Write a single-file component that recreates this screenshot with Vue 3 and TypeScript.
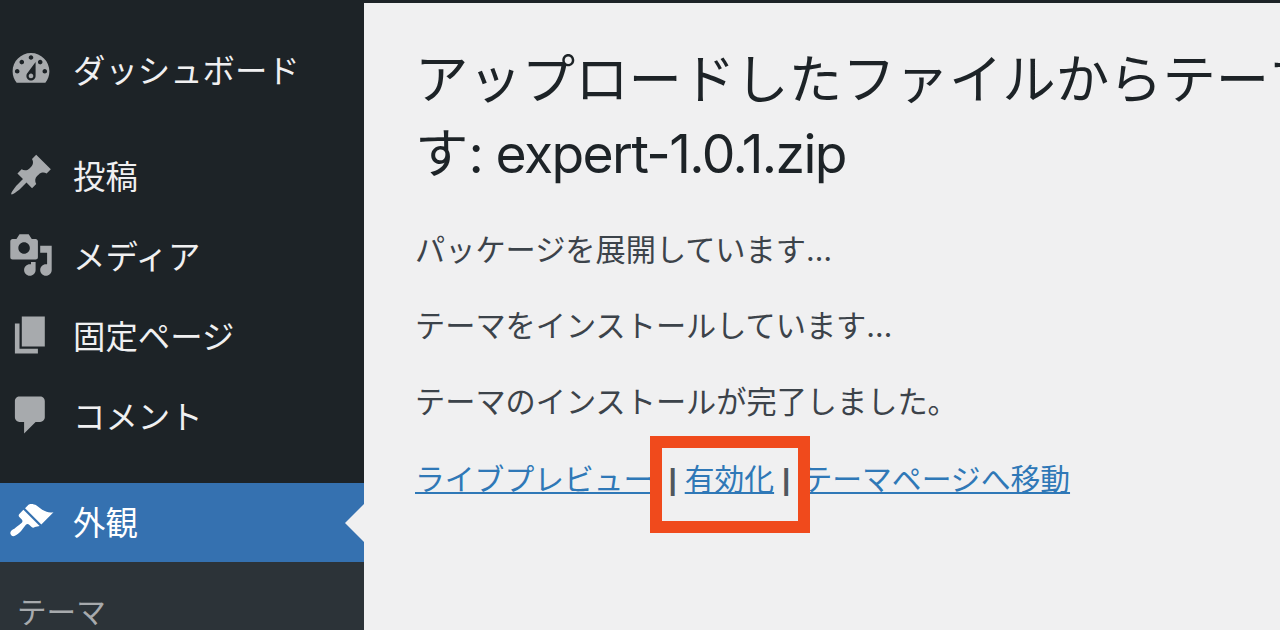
<script setup lang="ts">
interface MenuItem {
  label: string;
  icon: string;
  active?: boolean;
}

const topItems: MenuItem[] = [
  {
    label: 'ダッシュボード',
    icon: 'M3.76 16h12.48c1.1-1.37 1.76-3.11 1.76-5 0-4.42-3.58-8-8-8s-8 3.58-8 8c0 1.89.66 3.63 1.76 5zM10 4c.55 0 1 .45 1 1s-.45 1-1 1-1-.45-1-1 .45-1 1-1zM6 6c.55 0 1 .45 1 1s-.45 1-1 1-1-.45-1-1 .45-1 1-1zm8 0c.55 0 1 .45 1 1s-.45 1-1 1-1-.45-1-1 .45-1 1-1zm-5.37 5.55L12 7v6c0 1.1-.9 2-2 2s-2-.9-2-2c0-.57.24-1.08.63-1.45zM4 10c.55 0 1 .45 1 1s-.45 1-1 1-1-.45-1-1 .45-1 1-1zm12 0c.55 0 1 .45 1 1s-.45 1-1 1-1-.45-1-1 .45-1 1-1zm-5 3c0-.55-.45-1-1-1s-1 .45-1 1 .45 1 1 1 1-.45 1-1z',
  },
];

const contentItems: MenuItem[] = [
  {
    label: '投稿',
    icon: 'M10.44 3.02l1.82-1.82 6.36 6.35-1.83 1.82c-1.05-.68-2.48-.57-3.41.36l-.75.75c-.92.93-1.04 2.35-.35 3.41l-1.83 1.82-2.41-2.41-2.8 2.79c-.42.42-3.38 2.71-3.8 2.29s1.86-3.39 2.28-3.81l2.79-2.79L4.1 9.36l1.83-1.82c1.05.69 2.48.57 3.41-.36l.75-.75c.93-.92 1.04-2.35.35-3.41z',
  },
  {
    label: 'メディア',
    icon: 'M13 11V4c0-.55-.45-1-1-1h-1.67L9 1H5L3.67 3H2c-.55 0-1 .45-1 1v7c0 .55.45 1 1 1h10c.55 0 1-.45 1-1zM7 4.5c1.38 0 2.5 1.12 2.5 2.5S8.38 9.5 7 9.5 4.5 8.38 4.5 7 5.62 4.5 7 4.5zM14 6h5v10.5c0 1.38-1.12 2.5-2.5 2.5S14 17.88 14 16.5s1.12-2.5 2.5-2.5c.17 0 .34.02.5.05V9h-3V6zm-4 8.05V13h2v3.5c0 1.38-1.12 2.5-2.5 2.5S7 17.88 7 16.5 8.12 14 9.5 14c.17 0 .34.02.5.05z',
  },
  {
    label: '固定ページ',
    icon: 'M6 15V2h10v13H6zm-1 1h8v2H3V5h2v11z',
  },
  {
    label: 'コメント',
    icon: 'M5 2h9c1.1 0 2 .9 2 2v7c0 1.1-.9 2-2 2h-2l-5 5v-5H5c-1.1 0-2-.9-2-2V4c0-1.1.9-2 2-2z',
  },
];

const appearance: MenuItem = {
  label: '外観',
  active: true,
  icon: 'M14.48 11.06L7.41 3.99l1.5-1.5c.5-.56 2.3-.47 3.51.32 1.21.8 1.43 1.28 2.91 2.1 1.18.64 2.45 1.26 4.45.85zm-.71.71L6.7 4.7 4.93 6.47c-.39.39-.39 1.02 0 1.41l1.06 1.06c.39.39.39 1.03 0 1.42-.6.6-1.43 1.11-2.21 1.69-.35.26-.7.53-1.01.84C1.43 13.23.4 14.75 1.4 15.75c.99 1 2.52-.03 3.86-1.37.31-.31.58-.66.84-1.01.58-.78 1.09-1.61 1.69-2.21.39-.39 1.02-.39 1.41 0l1.06 1.06c.39.39 1.02.39 1.41 0z',
};

const groups: MenuItem[][] = [topItems, contentItems, [appearance]];

const steps: string[] = [
  'パッケージを展開しています…',
  'テーマをインストールしています…',
  'テーマのインストールが完了しました。',
];
</script>

<template>
  <div class="admin">
    <aside class="sidebar">
      <ul v-for="(group, i) in groups" :key="i" class="menu">
        <li v-for="item in group" :key="item.label" class="menuItem" :class="{ active: item.active }">
          <svg class="menuIcon" viewBox="0 0 20 20" aria-hidden="true">
            <path :d="item.icon" fill-rule="evenodd" />
          </svg>
          <span class="menuLabel">{{ item.label }}</span>
        </li>
      </ul>
      <ul class="submenu">
        <li>テーマ</li>
      </ul>
    </aside>

    <main class="content">
      <h1 class="title">アップロードしたファイルからテーマをインストールしています<span class="fileName">: expert-1.0.1.zip</span></h1>
      <p v-for="step in steps" :key="step" class="step">{{ step }}</p>
      <p class="actions">
        <a href="#">ライブプレビュー</a>
        <span class="sep first">|</span>
        <a href="#">有効化</a>
        <span class="sep last">|</span>
        <a href="#">テーマページへ移動</a>
        <span class="highlight"></span>
      </p>
    </main>
  </div>
</template>

<style>
html,
body {
  margin: 0;
  overflow: hidden;
  background: #f0f0f1;
}
</style>

<style scoped>
.admin {
  display: flex;
  width: 1280px;
  height: 630px;
  overflow: hidden;
  font-family: Inter, "Noto Sans CJK JP", sans-serif;
}

.sidebar {
  flex: 0 0 364px;
  padding-top: 30px;
  box-sizing: border-box;
  background: #1d2327;
}

.menu {
  list-style: none;
  margin: 0 0 26px;
  padding: 0;
}

.menu:nth-of-type(2) {
  margin-bottom: 27px;
}

.menu:nth-of-type(3) {
  margin-bottom: 0;
}

.menuItem {
  display: flex;
  align-items: center;
  gap: 19px;
  height: 80px;
  padding-left: 8px;
  font-size: 32.4px;
  color: #f0f0f1;
}

.menuLabel {
  margin-bottom: 4px;
}

.menuIcon {
  flex: none;
  width: 46px;
  height: 46px;
  margin-bottom: 2px;
  fill: #a7aaad;
}

.menuItem.active {
  position: relative;
  height: 79px;
  background: #3571b0;
  color: #fff;
}

.menuItem.active .menuIcon {
  fill: #fff;
}

.menuItem.active::after {
  content: "";
  position: absolute;
  right: 0;
  top: 50%;
  margin-top: -19px;
  border: 19px solid transparent;
  border-left-width: 0;
  border-right-color: #f0f0f1;
}

.submenu {
  list-style: none;
  margin: 0;
  padding: 30px 0 0 17px;
  height: 68px;
  background: #2c3338;
  color: #a7aaad;
  font-size: 29.6px;
  line-height: 40px;
}

.content {
  flex: 1;
  min-width: 0;
  box-sizing: border-box;
  padding: 40px 0 0 51px;
  border-top: 3px solid #1d2327;
  overflow: hidden;
  background: #f0f0f1;
}

.title {
  width: 1500px;
  margin: 0 0 39px;
  font-size: 53.4px;
  line-height: 74px;
  font-weight: 400;
  color: #1d2327;
}

.fileName {
  letter-spacing: -1.6px;
}

.step {
  margin: 0 0 36px;
  font-size: 30.2px;
  line-height: 40px;
  color: #3c434a;
}

.actions {
  position: relative;
  width: 800px;
  margin: 37px 0 0;
  font-size: 29.8px;
  line-height: 40px;
  color: #3c434a;
}

.actions a {
  color: #2f78b7;
}

.sep {
  margin: 0 8px;
  font-family: "Liberation Sans", sans-serif;
  font-weight: 700;
  color: #50575e;
}

.sep.first {
  margin-left: 15px;
}

.sep.last {
  margin-right: 12px;
}

.highlight {
  position: absolute;
  left: 235px;
  top: -23px;
  width: 160px;
  height: 97px;
  box-sizing: border-box;
  border: 12px solid #f04a1c;
}
</style>
